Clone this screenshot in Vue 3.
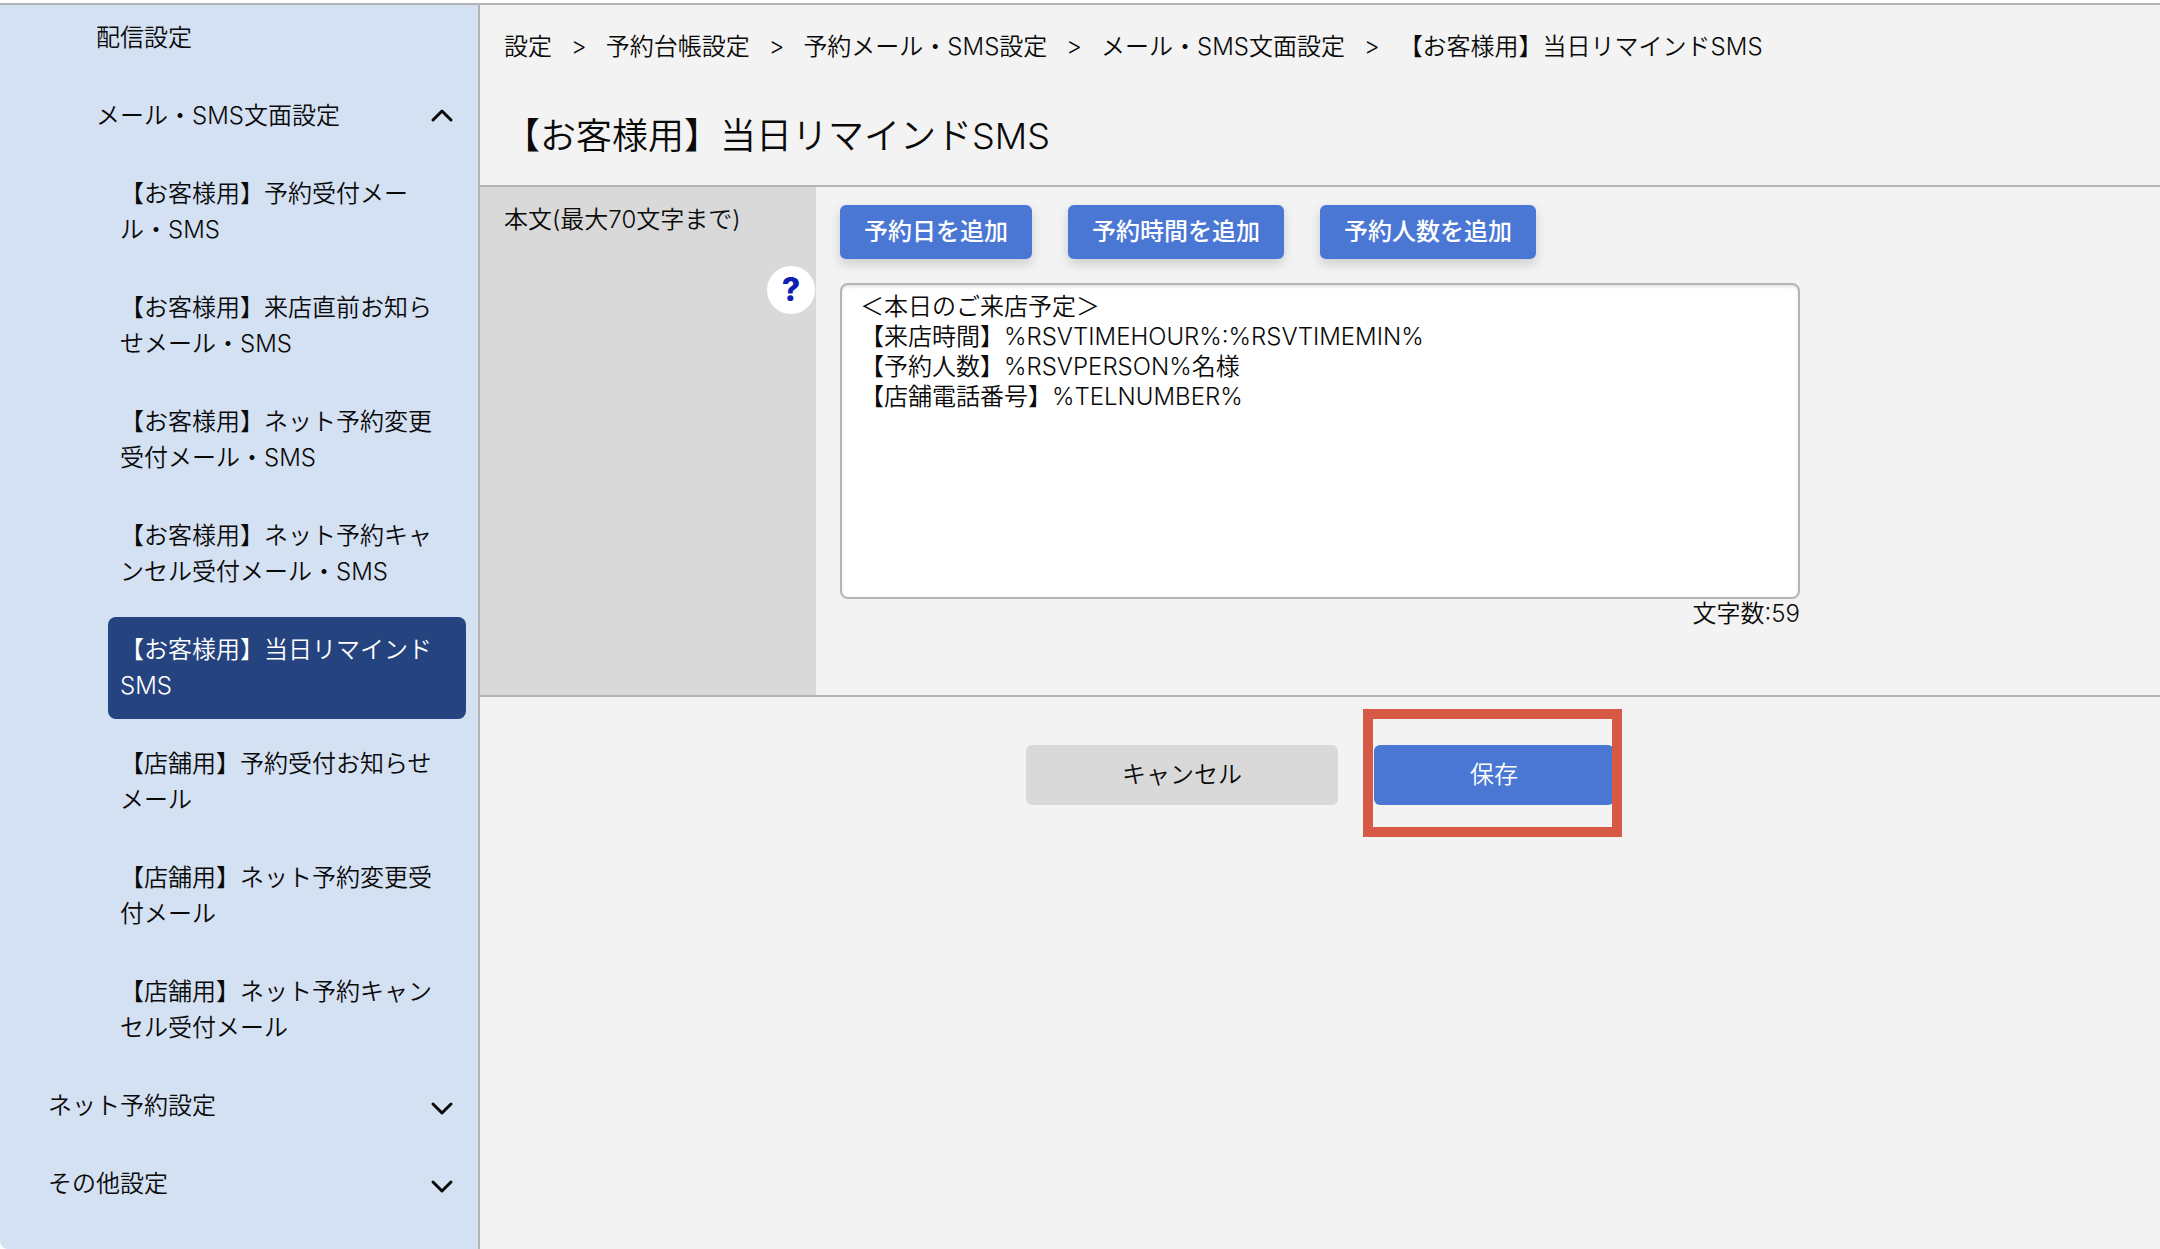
<script setup>
import { ref } from 'vue'

const mailMenus = [
  '【お客様用】予約受付メール・SMS',
  '【お客様用】来店直前お知らせメール・SMS',
  '【お客様用】ネット予約変更受付メール・SMS',
  '【お客様用】ネット予約キャンセル受付メール・SMS',
  '【お客様用】当日リマインドSMS',
  '【店舗用】予約受付お知らせメール',
  '【店舗用】ネット予約変更受付メール',
  '【店舗用】ネット予約キャンセル受付メール',
]
const current = ref('【お客様用】当日リマインドSMS')
const otherMenus = ['ネット予約設定', 'その他設定']
const crumbs = ['設定', '予約台帳設定', '予約メール・SMS設定', 'メール・SMS文面設定']
const tags = [
  { label: '予約日を追加', value: '%RSVDATE%' },
  { label: '予約時間を追加', value: '%RSVTIMEHOUR%:%RSVTIMEMIN%' },
  { label: '予約人数を追加', value: '%RSVPERSON%' },
]

const body = ref(`＜本日のご来店予定＞
【来店時間】%RSVTIMEHOUR%:%RSVTIMEMIN%
【予約人数】%RSVPERSON%名様
【店舗電話番号】%TELNUMBER%`)
const count = ref(59)

function addTag(value) {
  body.value += value
}
</script>

<template>
  <div class="page">
    <nav class="sidebar">
      <a href="#" class="item level2">配信設定</a>
      <button type="button" class="item level2">
        メール・SMS文面設定
        <svg class="chevron" viewBox="0 0 24 24"><path d="M3 16 L12 7 L21 16" /></svg>
      </button>
      <a
        v-for="menu in mailMenus"
        :key="menu"
        href="#"
        class="item level3"
        :class="{ active: menu === current }"
        @click.prevent="current = menu"
      >{{ menu }}</a>
      <button v-for="menu in otherMenus" :key="menu" type="button" class="item level1">
        {{ menu }}
        <svg class="chevron" viewBox="0 0 24 24"><path d="M3 10 L12 19 L21 10" /></svg>
      </button>
    </nav>

    <main class="main">
      <div class="crumbs">
        <template v-for="crumb in crumbs" :key="crumb">
          <a href="#">{{ crumb }}</a>
          <span>&gt;</span>
        </template>
        <span>{{ current }}</span>
      </div>
      <h1 class="title">{{ current }}</h1>

      <div class="row">
        <div class="row-head">
          <label for="body">本文(最大70文字まで)</label>
          <button type="button" class="help">?</button>
        </div>
        <div class="row-body">
          <div class="tags">
            <button
              v-for="tag in tags"
              :key="tag.label"
              type="button"
              class="tag"
              @click="addTag(tag.value)"
            >{{ tag.label }}</button>
          </div>
          <textarea id="body" v-model="body" class="text" spellcheck="false"></textarea>
          <div class="count">文字数:{{ count }}</div>
        </div>
      </div>

      <div class="actions">
        <button type="button" class="btn cancel">キャンセル</button>
        <div class="save-wrap">
          <button type="button" class="btn save">保存</button>
          <div class="marker"></div>
        </div>
      </div>
    </main>
  </div>
</template>

<style>
body {
  background: #fff;
}
</style>

<style scoped>
.page,
.page button,
.page textarea {
  font-family: Inter, "Noto Sans CJK JP", sans-serif;
  font-size: 24px;
  font-weight: 350;
  line-height: 36px;
  color: #0a0a0a;
}
.page {
  box-sizing: border-box;
  display: flex;
  min-height: 100vh;
  padding-top: 3px;
}
.page a {
  color: inherit;
  text-decoration: none;
}
.page button {
  border: none;
  cursor: pointer;
}
.sidebar {
  box-sizing: border-box;
  flex: none;
  display: flex;
  flex-direction: column;
  gap: 12px;
  width: 480px;
  padding-right: 12px;
  padding-bottom: 32px;
  background: #d4e1f3;
  border-top: 2px solid #b4b4b8;
  border-right: 2px solid #b4b4b8;
  border-bottom-left-radius: 8px;
}
.page .item {
  display: flex;
  justify-content: space-between;
  align-items: center;
  padding: 15px 12px;
  border-radius: 8px;
  background: none;
  text-align: left;
}
.page .level1 {
  margin-left: 36px;
}
.page .level2 {
  margin-left: 84px;
}
.page .level3 {
  margin-left: 108px;
}
.page .active {
  background: #25437f;
  color: #fff;
}
.chevron {
  width: 24px;
  height: 24px;
  fill: none;
  stroke: #0a0a0a;
  stroke-width: 3;
  stroke-linecap: round;
  stroke-linejoin: round;
}
.main {
  flex: 1;
  background: #f3f3f3;
  border-top: 2px solid #b4b4b4;
}
.crumbs {
  display: flex;
  gap: 19px;
  padding: 24px 24px 0;
}
.title {
  margin: 0;
  padding: 44px 24px 22px;
  font-size: 36px;
  font-weight: 350;
  line-height: 54px;
}
.row {
  display: flex;
  border-top: 2px solid #b4b4b4;
  border-bottom: 2px solid #b4b4b4;
}
.row-head {
  box-sizing: border-box;
  flex: none;
  display: flex;
  flex-direction: column;
  gap: 28px;
  width: 336px;
  padding: 15px 0 0 24px;
  background: #d9d9d9;
}
.page .help {
  align-self: flex-end;
  width: 48px;
  height: 48px;
  margin-right: 1px;
  padding: 0;
  border-radius: 50%;
  background: #fff;
  color: #0f1fb4;
  font-size: 32px;
  font-weight: 800;
}
.row-body {
  flex: 1;
  max-width: 960px;
  padding: 18px 24px 66px;
}
.tags {
  display: flex;
  gap: 36px;
  margin-bottom: 24px;
}
.page .tag {
  padding: 9px 24px;
  border-radius: 6px;
  background: #4a77d4;
  box-shadow: 0 5px 12px rgba(0, 0, 0, 0.16);
  color: #fff;
  font-weight: 500;
}
.page .text {
  display: block;
  box-sizing: border-box;
  width: 100%;
  height: 316px;
  padding: 7px 18px;
  border: 2px solid #b4b4b4;
  border-radius: 8px;
  background: #fff;
  box-shadow: inset 0 2px 3px rgba(0, 0, 0, 0.1);
  line-height: 30px;
  outline: none;
  resize: none;
}
.count {
  line-height: 30px;
  text-align: right;
}
.actions {
  display: flex;
  justify-content: center;
  gap: 36px;
  padding: 48px 24px;
}
.page .btn {
  height: 60px;
  border-radius: 6px;
}
.page .cancel {
  width: 312px;
  background: #d9d9d9;
}
.save-wrap {
  position: relative;
}
.page .save {
  width: 240px;
  background: #4a77d4;
  color: #fff;
}
.marker {
  position: absolute;
  top: -36px;
  left: -11px;
  box-sizing: border-box;
  width: 259px;
  height: 128px;
  border: 10px solid #d65946;
  pointer-events: none;
}
</style>
